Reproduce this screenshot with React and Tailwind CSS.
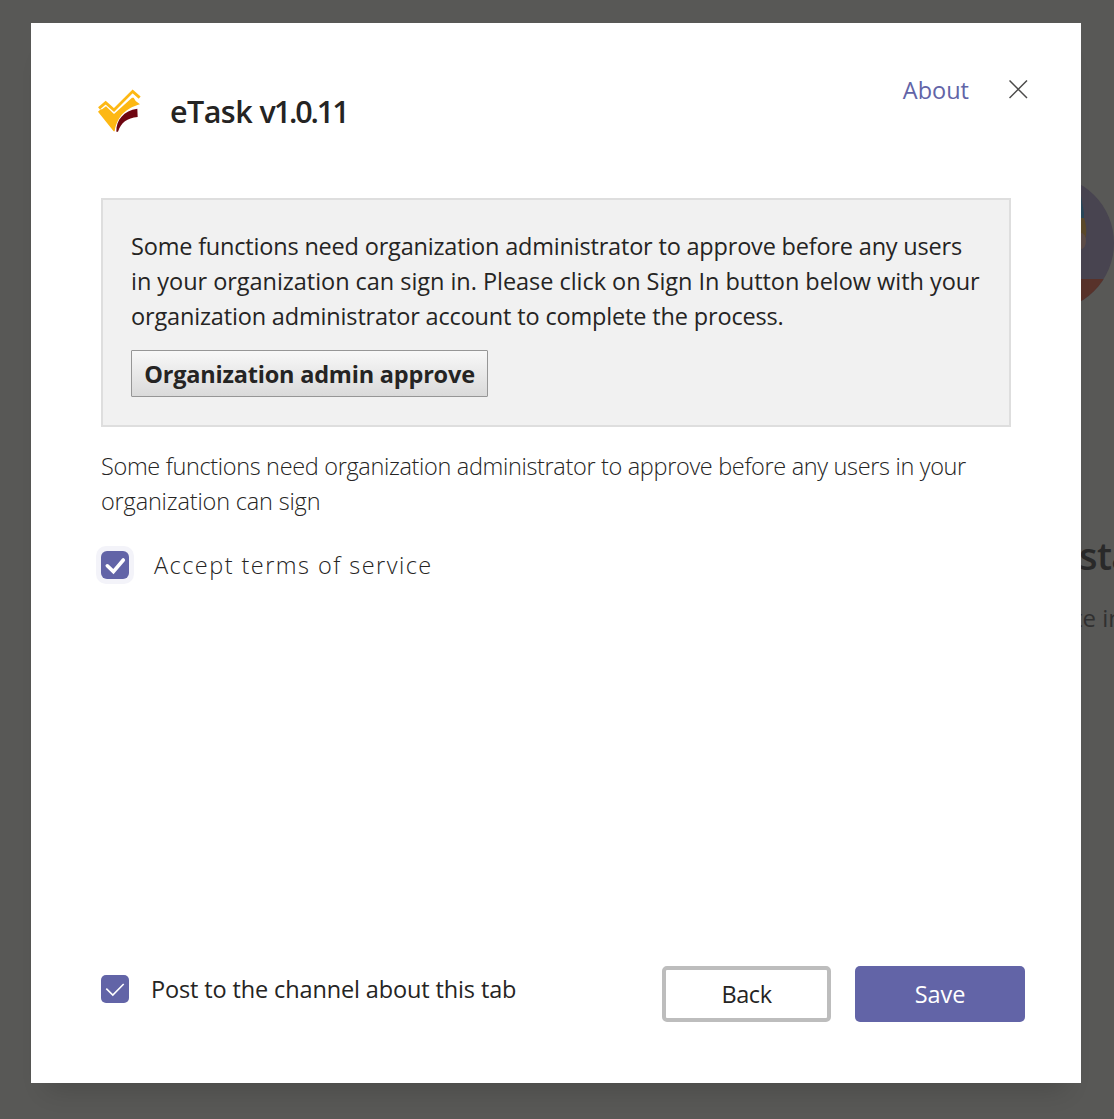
function Logo() {
  return (
    <svg viewBox="50 55 135 135" className="h-[45px] w-[45px]">
      <path d="M56 116 L76 99 L101 121 L157 65 L178 84" fill="none" stroke="#fdb813" strokeWidth="8.5" />
      <path d="M53 126 L61 119 L65 119 L77 110 L101 133 L155 84 L160 84 L166 94 L179 104 C150 112 112 130 103 185 L100 185 Z" fill="#fdb813" />
      <path d="M108 186 C107 151 130 123 171 117 L172 142 C140 145 122 159 113 186 Z" fill="#6e0510" />
    </svg>
  );
}

function Backdrop() {
  return (
    <div className="absolute inset-0">
      <svg className="absolute top-[170px] left-[978px]" width="136" height="146" viewBox="978 170 136 146">
        <defs>
          <clipPath id="avatar">
            <circle cx="1046" cy="243" r="68" />
          </clipPath>
        </defs>
        <g clipPath="url(#avatar)">
          <rect x="978" y="170" width="140" height="146" fill="#484450" />
          <rect x="978" y="279" width="140" height="40" fill="#58322a" />
          <path d="M1070 190 H1080 L1084 213 V218 H1070Z" fill="#29475a" />
          <path d="M1070 218 H1084 Q1087 226 1086 236 L1081 250 H1070Z" fill="#5c4a2b" />
          <ellipse cx="1081" cy="241" rx="5" ry="8" fill="#5d4d48" />
        </g>
      </svg>
      <div className="absolute top-[530px] left-[1079px] text-[38px] leading-[50px] font-semibold tracking-[-0.6px] whitespace-nowrap text-[#292929]">sta</div>
      <div className="absolute top-[600px] left-[1074px] text-[24px] leading-[36px] whitespace-nowrap text-[#303030]">te in</div>
    </div>
  );
}

export default function App() {
  return (
    <div className="relative h-[1119px] w-[1114px] overflow-hidden bg-[#585856] pt-[23px] pl-[31px] font-['Open_Sans',sans-serif] text-[23.5px] leading-[35px] text-[#252423]">
      <Backdrop />
      <main className="relative flex h-[1060px] w-[1050px] flex-col bg-white pr-[56px] pl-[70px] shadow-[0_22px_24px_-16px_rgba(0,0,0,0.16)]">
        <header className="-ml-1 flex h-[175px] shrink-0 items-start pt-[50px]">
          <div className="pt-[15px]">
            <Logo />
          </div>
          <h1 className="ml-[28px] pt-[17px] text-[30.5px] leading-[42px] font-semibold whitespace-pre">
            <span className="tracking-[-0.55px]">eTask </span>
            <span className="tracking-[-2.1px]">v1.0.11</span>
          </h1>
          <div className="ml-auto flex">
            <a className="text-[#6264a7]">About</a>
            <svg className="mt-[7px] mr-[-3px] ml-[40px]" width="19" height="19" viewBox="0 0 19 19" fill="none" stroke="#4c4b4a" strokeWidth="1.5">
              <path d="M0.5 0.5 L18 18 M18 0.5 L0.5 18" />
            </svg>
          </div>
        </header>

        <section className="h-[229px] w-[910px] shrink-0 border-2 border-[#dedede] bg-[#f1f1f1] px-[28px] pt-[29px] whitespace-nowrap">
          <p className="tracking-[-0.19px]">Some functions need organization administrator to approve before any users</p>
          <p className="tracking-[-0.04px]">in your organization can sign in. Please click on Sign In button below with your</p>
          <p className="tracking-[-0.16px]">organization administrator account to complete the process.</p>
          <button className="mt-[16px] flex h-[47px] w-[357px] items-center justify-center rounded-[1px] border border-[#969696] bg-linear-to-b from-[#f8f8f8] to-[#dadada] pt-[2px] font-bold tracking-[-0.2px]">
            Organization admin approve
          </button>
        </section>

        <div className="mt-[22px] font-light whitespace-nowrap">
          <p className="tracking-[-0.34px]">Some functions need organization administrator to approve before any users in your</p>
          <p className="tracking-[-0.17px]">organization can sign</p>
        </div>

        <label className="mt-[27px] -ml-[5px] flex h-[38px] items-center font-light">
          <span className="flex h-[38px] w-[38px] items-center justify-center rounded-[10px] bg-[#f3f3f9]">
            <svg width="28" height="28" viewBox="0 0 28 28" className="rounded-[6px] bg-[#6264a7]" fill="none" stroke="#fff" strokeWidth="3.6" strokeLinecap="round">
              <path d="M6.3 14.8 L12.4 20.6 L22.3 9" />
            </svg>
          </span>
          <span className="ml-[20px] tracking-[1.46px]">Accept terms of service</span>
        </label>

        <footer className="mt-auto mb-[61px] flex h-[56px] items-center">
          <label className="-mt-[10px] flex items-center">
            <svg width="28" height="28" viewBox="0 0 28 28" className="rounded-[5px] bg-[#6264a7]" fill="none" stroke="#fff" strokeWidth="1.6">
              <path d="M5.3 13.6 L11.8 20 L22.7 9" />
            </svg>
            <span className="ml-[22px] tracking-[-0.13px]">Post to the channel about this tab</span>
          </label>
          <button className="ml-auto h-[56px] w-[169px] rounded-[5px] border-4 border-[#bdbdbd] tracking-[-0.4px]">Back</button>
          <button className="ml-[24px] h-[56px] w-[170px] rounded-[5px] bg-[#6264a7] text-white tracking-[-0.1px]">Save</button>
        </footer>
      </main>
    </div>
  );
}
